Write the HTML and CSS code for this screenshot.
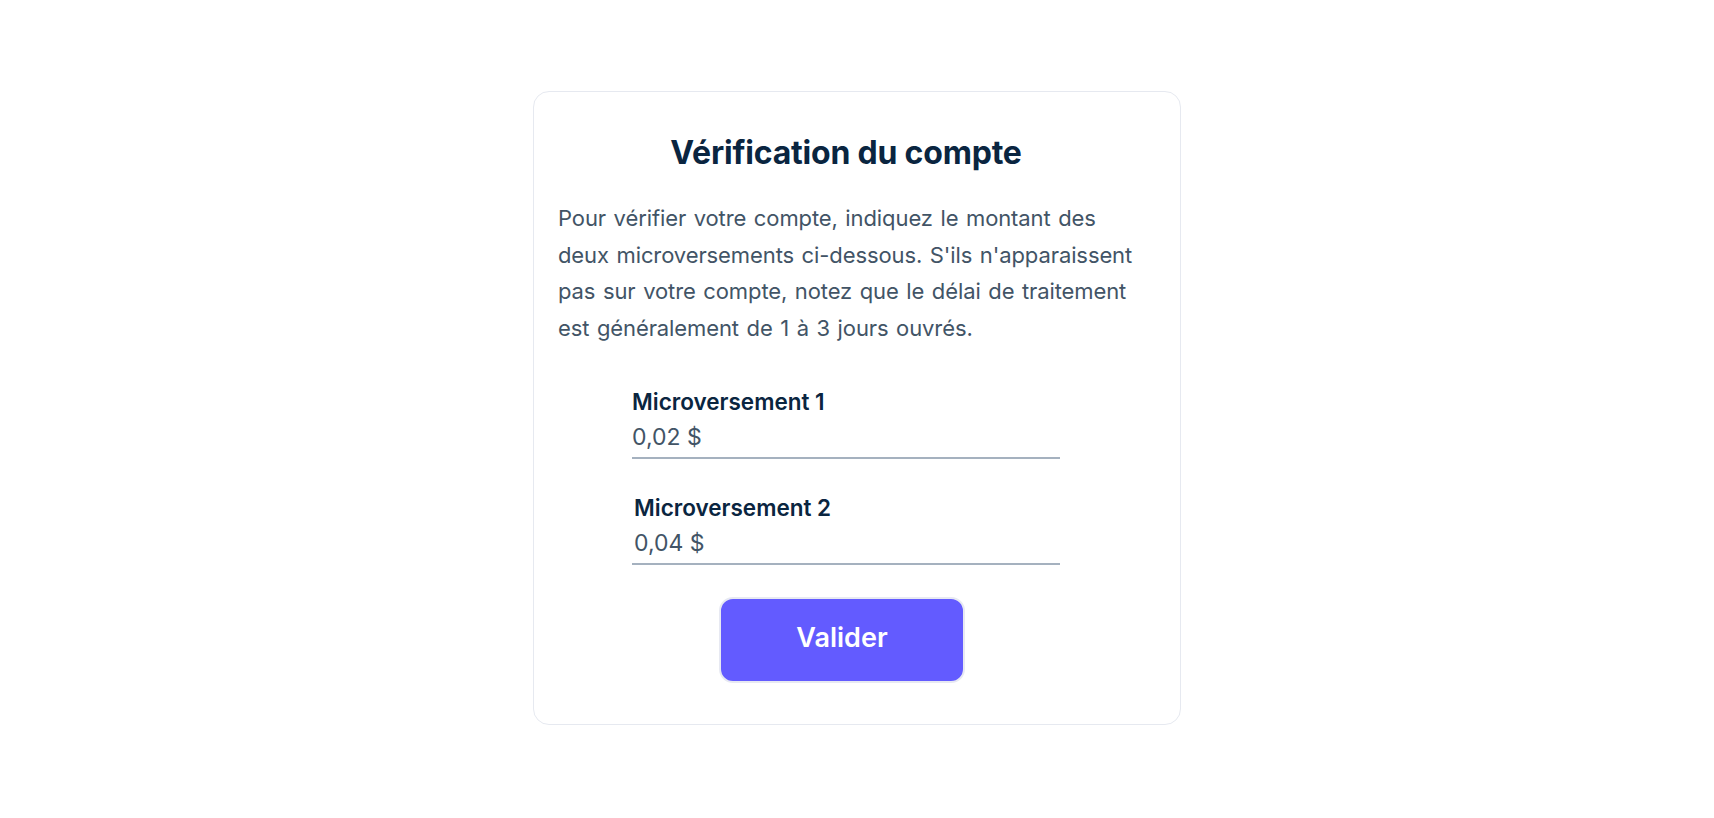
FILE: index.html
```html
<!DOCTYPE html>
<html lang="fr">
<head>
  <meta charset="UTF-8">
  <meta name="viewport" content="width=device-width, initial-scale=1.0">
  <title>Vérification du compte</title>
  <link rel="stylesheet" href="styles.css">
</head>
<body>

  <div class="page">
    <div class="card">
      <h1>Vérification du compte</h1>

      <p class="intro">Pour vérifier votre compte, indiquez le montant des<br>
        deux microversements ci-dessous. S'ils n'apparaissent<br>
        pas sur votre compte, notez que le délai de traitement<br>
        est généralement de 1 à 3 jours ouvrés.</p>

      <!-- Micro-deposit fields -->
      <form class="deposits">
        <div class="field">
          <label for="deposit-1">Microversement 1</label>
          <input type="text" id="deposit-1" value="0,02 $">
        </div>

        <div class="field field-shift">
          <label for="deposit-2">Microversement 2</label>
          <input type="text" id="deposit-2" value="0,04 $">
        </div>

        <button type="submit" class="button">Valider</button>
      </form>
    </div>
  </div>

</body>
</html>
```

FILE: styles.css
```css
/* Basic Styles */
body {
  font-family: Inter, "Noto Sans", sans-serif;
  margin: 0;
  padding: 0;
  background-color: #fff;
  color: #0a2540;
}

.page {
  display: flex;
  justify-content: center;
  padding-top: 91px;
}

/* Card */
.card {
  box-sizing: border-box;
  width: 648px;
  height: 634px;
  padding: 43px 24px 0 24px;
  border: 1px solid #e6e9f0;
  border-radius: 16px;
  background-color: #fff;
}

.card h1 {
  margin: 0;
  padding-right: 22px;
  text-align: center;
  font-size: 32px;
  line-height: 36px;
  font-weight: 700;
  letter-spacing: -0.2px;
  color: #0a2540;
}

.intro {
  margin: 29px -16px 0 0;
  font-size: 22px;
  line-height: 36.6px;
  letter-spacing: -0.1px;
  word-spacing: 1.5px;
  color: #425466;
}

/* Form */
.deposits {
  width: 428px;
  margin: 42px 0 0 74px;
}

.field {
  display: flex;
  flex-direction: column;
  margin-bottom: 35px;
}

.field label {
  font-size: 22.5px;
  line-height: 28px;
  font-weight: 600;
  color: #0a2540;
}

.field input {
  margin-top: 7px;
  padding: 0 0 6px 0;
  height: 28px;
  border: none;
  border-bottom: 2px solid #a5b1bf;
  font-family: inherit;
  font-size: 23px;
  color: #425466;
  background: transparent;
  outline: none;
}

.field-shift label,
.field-shift input {
  padding-left: 2px;
}

.field-shift {
  margin-bottom: 32px;
}

/* Button */
.button {
  display: block;
  box-sizing: border-box;
  width: 246px;
  height: 86px;
  margin-left: 87px;
  padding-bottom: 6px;
  border: 2px solid #e7e9f2;
  border-radius: 14px;
  background-color: #635bff;
  color: #fff;
  font-family: inherit;
  font-size: 27px;
  font-weight: 600;
  cursor: pointer;
}

.button:hover {
  background-color: #5851e8;
}
```
